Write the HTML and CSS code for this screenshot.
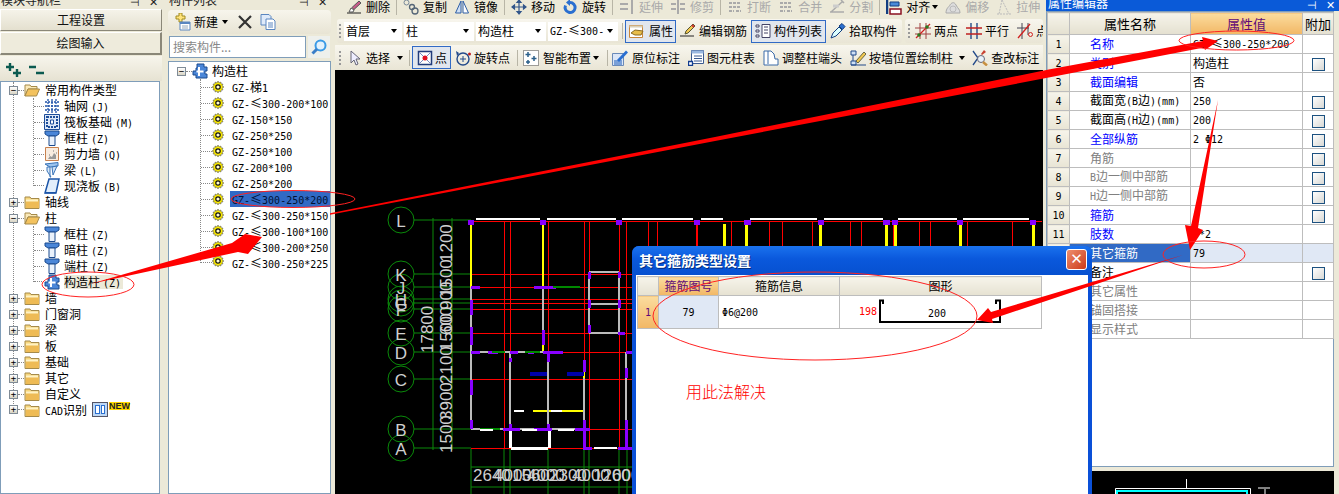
FILE: index.html
```html
<!DOCTYPE html>
<html lang="zh">
<head>
<meta charset="utf-8">
<title>构件绘图</title>
<link rel="stylesheet" href="styles.css">
</head>
<body>
<svg class="sprite" xmlns="http://www.w3.org/2000/svg">
  <symbol id="fold" viewBox="0 0 16 16"><path d="M1 3h5l1 1.500h8v10H1z" fill="#f6d67e" stroke="#a58a4a"/><path d="M2 7h13v7H2z" fill="#eebb55"/><path d="M2 5.500h12v2H2z" fill="#fff2c4"/></symbol>
  <symbol id="open" viewBox="0 0 16 16"><path d="M1 3h5l1 1.500h6V7H4L1 14z" fill="#fbe9b8" stroke="#a58a4a"/><path d="M4 7h11.500L12.500 14H1z" fill="#f3c25e" stroke="#a58a4a"/></symbol>
  <symbol id="gear" viewBox="0 0 12 12"><path d="M6 0l1 2 2-1 0 2 2 0-1 2 2 1-2 1 1 2-2 0 0 2-2-1-1 2-1-2-2 1 0-2-2 0 1-2-2-1 2-1-1-2 2 0 0-2 2 1z" fill="#ffee00" stroke="#444" stroke-width=".5"/><circle cx="6" cy="6" r="2.200" fill="#fffbd0" stroke="#111" stroke-width="1.200"/></symbol>
  <symbol id="grid" viewBox="0 0 16 16"><path d="M4 1v14M8 1v14M12 1v14M1 4h14M1 8h14M1 12h14" stroke="#1f52a8" stroke-width="1.300" stroke-dasharray="2 1" fill="none"/></symbol>
  <symbol id="raft" viewBox="0 0 16 16"><path d="M.5.500h15v15H.5z" fill="#dce7f7" stroke="#1d4d9a"/><path d="M3 3h10v10H3z" fill="none" stroke="#1d4d9a" stroke-dasharray="2 1" stroke-width="2"/><path d="M6.500 6h3v4h-3z" fill="#fff" stroke="#1d4d9a"/></symbol>
  <symbol id="col" viewBox="0 0 16 16"><path d="M1 1h14v3l-3 2H4L1 4z" fill="#4a86d8" stroke="#1b4a8e"/><path d="M5 6h6v9.500H5z" fill="#e9f1fb" stroke="#1b4a8e"/></symbol>
  <symbol id="wall" viewBox="0 0 16 16"><path d="M1.500 1.500h13v13h-13z" fill="#f8ece0" stroke="#c8814e"/><path d="M4 13l2-3 2 1 2-4 2 2v4z" fill="#999"/><path d="M5 9h1M9 5h1M12 7h1" stroke="#777"/></symbol>
  <symbol id="beam" viewBox="0 0 16 16"><path d="M1 2l13-1.500V4L6 5z" fill="#9cc4ee" stroke="#3a74b8"/><path d="M3 5l3 0 0 10H7L3 9z" fill="#dbe9f8" stroke="#3a74b8"/><path d="M8 5l5-1-4 9z" fill="#cfe2f6" stroke="#3a74b8"/></symbol>
  <symbol id="slab" viewBox="0 0 16 16"><path d="M5 1h10l-3 14H1z" fill="#e2eefb" stroke="#1c55a8" stroke-width="1.500"/><path d="M1 14h11v1.500H1z" fill="#1c55a8"/></symbol>
  <symbol id="gz" viewBox="0 0 16 16"><path d="M5 1h7v3h3v4h-2v3h2v4H4v-3H1V8h3V5h1z" fill="#4a86d8" stroke="#1b4a8e"/><path d="M7 4v9M4.500 8.500h7" stroke="#fff" stroke-width="2"/></symbol>
  <symbol id="plusg" viewBox="0 0 16 14"><path d="M5 0v8M1 4h8M12 6v8M8 10h8" stroke="#0b5a50" stroke-width="2.400" fill="none"/></symbol>
  <symbol id="minusg" viewBox="0 0 16 14"><path d="M1 4h7M8 10h8" stroke="#0b5a50" stroke-width="2.400" fill="none"/></symbol>
  <symbol id="newi" viewBox="0 0 18 18"><path d="M6 0v3H3v3h3v3h3V6h3V3H9V0z" fill="#ffe37a" stroke="#a08a20"/><path d="M7 9h10v8H7z" fill="#fff" stroke="#5a86c0"/><path d="M7 9h10v2H7z" fill="#5a86c0"/><path d="M9 13h6M9 15h6" stroke="#9ab"/></symbol>
  <symbol id="xi" viewBox="0 0 14 14"><path d="M1 1l12 12M13 1L1 13" stroke="#333" stroke-width="2.200"/></symbol>
  <symbol id="copyi" viewBox="0 0 16 16"><path d="M1 .500h8l2 2V11H1z" fill="#dfeafa" stroke="#5a86c0"/><path d="M6 5h7l2 2v8.500H6z" fill="#fff" stroke="#5a86c0"/><path d="M8 9h5M8 11h5M8 13h5" stroke="#5a86c0"/></symbol>
  <symbol id="lens" viewBox="0 0 16 16"><circle cx="9.500" cy="6.500" r="5" fill="#e2f1fd" stroke="#3a9ae6" stroke-width="2"/><path d="M6 10l-4.500 4.500" stroke="#3a7ec8" stroke-width="3"/></symbol>
  <symbol id="tdel" viewBox="0 0 16 16"><path d="M1 14h14" stroke="#222"/><path d="M3 13l2-4 3 2-1 2z" fill="#fff" stroke="#555"/><path d="M6 8.500L13 2l2 2-7 6.500z" fill="#c85a8a" stroke="#555"/></symbol>
  <symbol id="tcopy" viewBox="0 0 16 16"><circle cx="3.500" cy="3.500" r="2.500" fill="none" stroke="#789"/><circle cx="9" cy="8" r="2.500" fill="none" stroke="#567" stroke-width="1.300"/><circle cx="12" cy="12" r="3" fill="none" stroke="#567" stroke-width="1.300"/></symbol>
  <symbol id="tmir" viewBox="0 0 16 16"><path d="M7 2L1.500 14H7z" fill="#cfe0f5" stroke="#2f5fa5"/><path d="M9 2l5.500 12H9z" fill="#fff" stroke="#2f5fa5"/></symbol>
  <symbol id="tmov" viewBox="0 0 16 16"><path d="M8 1v14M1 8h14M8 1L6 3.500h4zM8 15l-2-2.500h4zM1 8l2.500-2v4zM15 8l-2.500-2v4z" stroke="#31558a" stroke-width="1.200" fill="#31558a"/></symbol>
  <symbol id="trot" viewBox="0 0 16 16"><path d="M8 3.500a5 5 0 1 1-4.500 3" fill="none" stroke="#2a6fd0" stroke-width="3"/><path d="M8 0v7L4 3.500z" fill="#2a6fd0"/></symbol>
  <symbol id="text" viewBox="0 0 16 16"><path d="M1 5h8M1 10h8M13 1v14" stroke="#aaa" stroke-width="2" fill="none"/></symbol>
  <symbol id="ttrim" viewBox="0 0 16 16"><path d="M1 5h5M1 10h5M10 5h5M10 10h5M8 1v14" stroke="#aaa" stroke-width="2" fill="none"/></symbol>
  <symbol id="tbrk" viewBox="0 0 16 16"><path d="M2 4h12M2 12h5M9 12h5M2 8h12" stroke="#aaa" stroke-width="2" stroke-dasharray="3 1" fill="none"/></symbol>
  <symbol id="tsplit" viewBox="0 0 16 16"><path d="M1 13h14M2 13L13 3M12 1l3 3" stroke="#aaa" stroke-width="1.500" fill="none"/><path d="M4 7h6" stroke="#ccc" stroke-width="3"/></symbol>
  <symbol id="talign" viewBox="0 0 16 16"><path d="M1 1v14" stroke="#123d80" stroke-width="2.500"/><path d="M4 3h9v4H4z" fill="#4a8ad8" stroke="#123d80"/><path d="M4 10h11v5H4z" fill="#fff" stroke="#8a1020" stroke-width="1.500"/></symbol>
  <symbol id="toff" viewBox="0 0 16 16"><path d="M1 14c0-5 3-6 4-8s4-4 6 0 4 4 4 8z" fill="#ddd" stroke="#aaa"/><circle cx="8" cy="10" r="3" fill="none" stroke="#bbb"/></symbol>
  <symbol id="tstr" viewBox="0 0 16 16"><path d="M1 15h14M6 1L3 15M6 1l7 14" stroke="#bbb" fill="none" stroke-dasharray="2 1"/></symbol>
  <symbol id="tprop" viewBox="0 0 16 16"><path d="M.5 2.500h13v12H.5z" fill="#fff" stroke="#c9863a"/><path d="M.5 2.500h13v2H.5z" fill="#d8d0b8"/><path d="M2 10l4-3 8 1-2 4H6z" fill="#e8bd4a" stroke="#8a6a20"/></symbol>
  <symbol id="tpen" viewBox="0 0 16 16"><path d="M0 13h14" stroke="#222"/><path d="M5 11l1-3L13 1l2 2-7 7z" fill="#f2c850" stroke="#553"/><path d="M12 2l2 2" stroke="#c33" stroke-width="2"/></symbol>
  <symbol id="tlist" viewBox="0 0 16 16"><path d="M1 2h3v2H1zM1 7h3v2H1zM1 12h3v2H1z" fill="#fff" stroke="#446"/><path d="M7 1.500h8v13H7z" fill="#fff" stroke="#446"/><path d="M9 4h4M9 7h4M9 10h4" stroke="#446"/></symbol>
  <symbol id="tpick" viewBox="0 0 16 16"><path d="M1 15l2-5 6-6 3 3-6 6z" fill="#dff" stroke="#123d80"/><path d="M9 3l3-2.500 3 3L12.500 6.500z" fill="#2a6fd0" stroke="#123d80"/></symbol>
  <symbol id="t2p" viewBox="0 0 16 16"><path d="M5 0v16M11 0v16M0 5h16M0 11h16" stroke="#a04040" fill="none"/><path d="M1 15L15 1" stroke="#d02020" stroke-width="1.300"/><circle cx="4" cy="12" r="1.800" fill="#2a7a20"/><circle cx="12" cy="4" r="1.800" fill="#2a7a20"/></symbol>
  <symbol id="tpar" viewBox="0 0 16 16"><path d="M5 0v16M11 0v16" stroke="#123d80" stroke-width="1.300"/><path d="M0 5h16M0 11h16" stroke="#c02020" stroke-width="1.300"/></symbol>
  <symbol id="tpa" viewBox="0 0 16 16"><path d="M5 0v16M11 0v12M0 5h12" stroke="#445" fill="none"/><path d="M1 15L13 1" stroke="#d02020" stroke-width="1.300"/><circle cx="13.500" cy="11.500" r="2" fill="none" stroke="#d02020"/></symbol>
  <symbol id="tsel" viewBox="0 0 16 16"><path d="M5 1v12l3-3 2 5 2-1-2-5h4z" fill="#eef" stroke="#667"/></symbol>
  <symbol id="tdot" viewBox="0 0 16 16"><path d="M1.500 1.500h13v13h-13z" fill="#fff" stroke="#223c7a" stroke-width="1.500"/><path d="M2 2l12 12M14 2L2 14" stroke="#7a8ac0"/><circle cx="8" cy="8" r="2.500" fill="#e01020"/></symbol>
  <symbol id="trp" viewBox="0 0 16 16"><circle cx="8" cy="9" r="6" fill="none" stroke="#234a8a" stroke-width="1.400"/><path d="M8 6v6M5 9h6" stroke="#234a8a"/><path d="M1 1l3 2-2 3z" fill="#234a8a"/><circle cx="14.500" cy="4" r="1.500" fill="#c02020"/></symbol>
  <symbol id="tsmart" viewBox="0 0 16 16"><path d="M.5.500h15v15H.5z" fill="#fff" stroke="#444" stroke-dasharray="1 1"/><path d="M5 2v5M2.500 4.500h5M11 6v5M8.500 8.500h5M5 10v4M3 12h4" stroke="#2a5f8a" stroke-width="1.500"/></symbol>
  <symbol id="tmark" viewBox="0 0 16 16"><path d="M.5 3.500h11v12H.5z" fill="#dbe6f7" stroke="#6a8ab8"/><path d="M2 10h8v5H2z" fill="#7aa0d8"/><path d="M5 10L14 .5l2 2L7 12z" fill="#2a6fd0"/></symbol>
  <symbol id="ttable" viewBox="0 0 16 16"><path d="M3.500.500h12v13h-12z" fill="#fff" stroke="#3a5a90"/><path d="M3.500.500h12v3h-12z" fill="#9ab8e0"/><path d="M6 6h8M6 8.500h8M6 11h8" stroke="#3a5a90"/><path d="M.5 11.500h4v4h-4z" fill="#fff" stroke="#123d90" stroke-width="1.300"/></symbol>
  <symbol id="tadj" viewBox="0 0 16 16"><path d="M1 1h7l3 3 1 5h3v6H1z" fill="#fff" stroke="#3a6aa8"/><path d="M5 1v13" stroke="#3a6aa8"/></symbol>
  <symbol id="twall" viewBox="0 0 16 16"><path d="M1 1h5v4H1zM1 11h5v4H1z" fill="#cfe0f5" stroke="#234a8a"/><path d="M3 5v6M1 15h15" stroke="#234a8a"/><path d="M6 11l8-9 2 2-8 9z" fill="#f2c850" stroke="#664"/></symbol>
  <symbol id="tchk" viewBox="0 0 16 16"><path d="M1 1l5 7-5 7" fill="none" stroke="#234a8a" stroke-width="1.300"/><path d="M12 0l-3 4 1 1 4-3z" fill="#c84030"/><circle cx="9" cy="9" r="3.500" fill="#e8f2fb" stroke="#667"/><path d="M11 12l4 3.500" stroke="#c89040" stroke-width="2.500"/></symbol>
</svg>

<div class="app">
  <aside class="nav">
    <div class="title"><span class="title-txt">模块导航栏</span><span class="pin">⊣</span><span class="pin">✕</span></div>
    <button class="wide">工程设置</button>
    <button class="wide wide-on">绘图输入</button>
    <div class="bar-icons">
      <svg class="i16"><use href="#plusg"/></svg>
      <svg class="i16"><use href="#minusg"/></svg>
    </div>
    <div class="tree">
      <ul class="root">
        <li>
          <div class="row"><i class="exp">−</i><i class="tick"></i><svg class="i16"><use href="#open"/></svg><span class="lb">常用构件类型</span></div>
          <ul class="kids">
            <li class="row"><i class="tick2"></i><svg class="i16"><use href="#grid"/></svg><span class="lc">轴网<b class="m">(J)</b></span></li>
            <li class="row"><i class="tick2"></i><svg class="i16"><use href="#raft"/></svg><span class="lc">筏板基础<b class="m">(M)</b></span></li>
            <li class="row"><i class="tick2"></i><svg class="i16"><use href="#col"/></svg><span class="lc">框柱<b class="m">(Z)</b></span></li>
            <li class="row"><i class="tick2"></i><svg class="i16"><use href="#wall"/></svg><span class="lc">剪力墙<b class="m">(Q)</b></span></li>
            <li class="row"><i class="tick2"></i><svg class="i16"><use href="#beam"/></svg><span class="lc">梁<b class="m">(L)</b></span></li>
            <li class="row last"><i class="tick2"></i><svg class="i16"><use href="#slab"/></svg><span class="lc">现浇板<b class="m">(B)</b></span></li>
          </ul>
          <div class="after-kids"></div>
        </li>
        <li class="row"><i class="exp">+</i><i class="tick"></i><svg class="i16"><use href="#fold"/></svg><span class="lb">轴线</span></li>
        <li>
          <div class="row"><i class="exp">−</i><i class="tick"></i><svg class="i16"><use href="#open"/></svg><span class="lb">柱</span></div>
          <ul class="kids">
            <li class="row"><i class="tick2"></i><svg class="i16"><use href="#col"/></svg><span class="lc">框柱<b class="m">(Z)</b></span></li>
            <li class="row"><i class="tick2"></i><svg class="i16"><use href="#col"/></svg><span class="lc">暗柱<b class="m">(Z)</b></span></li>
            <li class="row"><i class="tick2"></i><svg class="i16"><use href="#col"/></svg><span class="lc">端柱<b class="m">(Z)</b></span></li>
            <li class="row last"><i class="tick2"></i><svg class="i16"><use href="#gz"/></svg><span class="lc lc-on">构造柱<b class="m">(Z)</b></span></li>
          </ul>
          <div class="after-kids"></div>
        </li>
        <li class="row"><i class="exp">+</i><i class="tick"></i><svg class="i16"><use href="#fold"/></svg><span class="lb">墙</span></li>
        <li class="row"><i class="exp">+</i><i class="tick"></i><svg class="i16"><use href="#fold"/></svg><span class="lb">门窗洞</span></li>
        <li class="row"><i class="exp">+</i><i class="tick"></i><svg class="i16"><use href="#fold"/></svg><span class="lb">梁</span></li>
        <li class="row"><i class="exp">+</i><i class="tick"></i><svg class="i16"><use href="#fold"/></svg><span class="lb">板</span></li>
        <li class="row"><i class="exp">+</i><i class="tick"></i><svg class="i16"><use href="#fold"/></svg><span class="lb">基础</span></li>
        <li class="row"><i class="exp">+</i><i class="tick"></i><svg class="i16"><use href="#fold"/></svg><span class="lb">其它</span></li>
        <li class="row"><i class="exp">+</i><i class="tick"></i><svg class="i16"><use href="#fold"/></svg><span class="lb">自定义</span></li>
        <li class="row last"><i class="exp">+</i><i class="tick"></i><svg class="i16"><use href="#fold"/></svg><span class="lb"><b class="m">CAD</b>识别</span><span class="cadbox"><i></i><i></i></span><span class="newtag">NEW</span></li>
      </ul>
    </div>
  </aside>

  <section class="list">
    <div class="title"><span class="title-txt">构件列表</span><span class="pin">⊣</span><span class="pin">✕</span></div>
    <div class="list-bar">
      <svg class="i18"><use href="#newi"/></svg><span>新建</span><i class="caret"></i>
      <svg class="i14 list-x"><use href="#xi"/></svg>
      <svg class="i16 list-c"><use href="#copyi"/></svg>
    </div>
    <div class="search">
      <div class="search-in">搜索构件...</div>
      <div class="search-btn"><svg class="i16"><use href="#lens"/></svg></div>
    </div>
    <div class="tree list-tree">
      <div class="row"><i class="exp">−</i><i class="tick"></i><svg class="i16"><use href="#gz"/></svg><span class="lb lb-l">构造柱</span></div>
      <ul class="kids-l">
        <li class="row"><i class="tick3"></i><svg class="i12"><use href="#gear"/></svg><span class="gzt"><b class="m">GZ-</b>梯<b class="m">1</b></span></li>
        <li class="row"><i class="tick3"></i><svg class="i12"><use href="#gear"/></svg><span class="gzt"><b class="m">GZ-</b>≤<b class="m">300-200*100</b></span></li>
        <li class="row"><i class="tick3"></i><svg class="i12"><use href="#gear"/></svg><span class="gzt"><b class="m">GZ-150*150</b></span></li>
        <li class="row"><i class="tick3"></i><svg class="i12"><use href="#gear"/></svg><span class="gzt"><b class="m">GZ-250*250</b></span></li>
        <li class="row"><i class="tick3"></i><svg class="i12"><use href="#gear"/></svg><span class="gzt"><b class="m">GZ-250*100</b></span></li>
        <li class="row"><i class="tick3"></i><svg class="i12"><use href="#gear"/></svg><span class="gzt"><b class="m">GZ-200*100</b></span></li>
        <li class="row"><i class="tick3"></i><svg class="i12"><use href="#gear"/></svg><span class="gzt"><b class="m">GZ-250*200</b></span></li>
        <li class="row"><i class="tick3"></i><svg class="i12"><use href="#gear"/></svg><span class="gzt gzt-on"><b class="m">GZ-</b>≤<b class="m">300-250*200</b></span></li>
        <li class="row"><i class="tick3"></i><svg class="i12"><use href="#gear"/></svg><span class="gzt"><b class="m">GZ-</b>≤<b class="m">300-250*150</b></span></li>
        <li class="row"><i class="tick3"></i><svg class="i12"><use href="#gear"/></svg><span class="gzt"><b class="m">GZ-</b>≤<b class="m">300-100*100</b></span></li>
        <li class="row"><i class="tick3"></i><svg class="i12"><use href="#gear"/></svg><span class="gzt"><b class="m">GZ-</b>≤<b class="m">300-200*250</b></span></li>
        <li class="row last"><i class="tick3"></i><svg class="i12"><use href="#gear"/></svg><span class="gzt"><b class="m">GZ-</b>≤<b class="m">300-250*225</b></span></li>
      </ul>
    </div>
  </section>

  <main class="main">
    <div class="tb tb-top">
      <span class="tool"><svg class="i16"><use href="#tdel"/></svg>删除</span><i class="sep"></i>
      <span class="tool"><svg class="i16"><use href="#tcopy"/></svg>复制</span>
      <span class="tool"><svg class="i16"><use href="#tmir"/></svg>镜像</span><i class="sep"></i>
      <span class="tool"><svg class="i16"><use href="#tmov"/></svg>移动</span>
      <span class="tool"><svg class="i16"><use href="#trot"/></svg>旋转</span><i class="sep"></i>
      <span class="tool off"><svg class="i16"><use href="#text"/></svg>延伸</span>
      <span class="tool off"><svg class="i16"><use href="#ttrim"/></svg>修剪</span><i class="sep"></i>
      <span class="tool off"><svg class="i16"><use href="#tbrk"/></svg>打断</span>
      <span class="tool off"><svg class="i16"><use href="#tbrk"/></svg>合并</span>
      <span class="tool off"><svg class="i16"><use href="#tsplit"/></svg>分割</span><i class="sep"></i>
      <span class="tool"><svg class="i16"><use href="#talign"/></svg>对齐<i class="caret"></i></span>
      <span class="tool off"><svg class="i16"><use href="#toff"/></svg>偏移</span>
      <span class="tool off"><svg class="i16"><use href="#tstr"/></svg>拉伸</span>
    </div>

    <div class="tb-row tb-mid">
      <div class="tbx tbx-a">
        <i class="grip"></i>
        <div class="combo c58"><span>首层</span><i class="caret"></i></div>
        <div class="combo c70"><span>柱</span><i class="caret"></i></div>
        <div class="combo c70"><span>构造柱</span><i class="caret"></i></div>
        <div class="combo c70"><span><b class="m">GZ-</b>≤<b class="m">300-</b></span><i class="caret"></i></div>
        <i class="sep sep-a"></i>
        <span class="tool on"><svg class="i16"><use href="#tprop"/></svg>属性</span>
        <span class="tool g3"><svg class="i16"><use href="#tpen"/></svg>编辑钢筋</span>
        <span class="tool on on-w g3"><svg class="i16"><use href="#tlist"/></svg>构件列表</span>
        <span class="tool g3"><svg class="i16"><use href="#tpick"/></svg>拾取构件</span>
      </div>
      <div class="tbx tbx-b">
        <i class="grip"></i>
        <span class="tool g3"><svg class="i16"><use href="#t2p"/></svg>两点</span>
        <span class="tool g3"><svg class="i16"><use href="#tpar"/></svg>平行</span>
        <span class="tool g3"><svg class="i16"><use href="#tpa"/></svg>点</span>
      </div>
    </div>

    <div class="tb-row tb-low">
      <i class="grip"></i>
      <span class="tool"><svg class="i16"><use href="#tsel"/></svg>选择<i class="caret car-wide"></i></span>
      <i class="sep sep-a"></i>
      <span class="tool on dotbtn"><svg class="i16"><use href="#tdot"/></svg>点</span>
      <span class="tool g3"><svg class="i16"><use href="#trp"/></svg>旋转点</span>
      <i class="sep sep-b"></i>
      <span class="tool"><svg class="i16"><use href="#tsmart"/></svg>智能布置<i class="caret"></i></span>
      <i class="sep sep-c"></i>
      <span class="tool"><svg class="i16"><use href="#tmark"/></svg>原位标注</span>
      <span class="tool g3 wg"><svg class="i16"><use href="#ttable"/></svg>图元柱表</span>
      <span class="tool g3 wg"><svg class="i16"><use href="#tadj"/></svg>调整柱端头</span>
      <span class="tool g3 wg"><svg class="i16"><use href="#twall"/></svg>按墙位置绘制柱<i class="caret car-wide"></i></span>
      <span class="tool g3 wg-s"><svg class="i16"><use href="#tchk"/></svg>查改标注</span>
    </div>

    <svg class="cad" viewBox="335 70 708 424" xmlns="http://www.w3.org/2000/svg">
      <g stroke="#0a8a0a" fill="none">
        <path d="M414 220H471M414 274H471M414 287H471M414 299H471M414 303H471M414 309H471M414 333H471M414 352H471M414 379H471M414 429H471M414 448H471"/>
        <path d="M433 218V450M452 218V450M471 449V494M504 449V494M510 449V494M548 449V494M584 449V494M589 449V494M619 449V494M627 449V494"/>
        <path d="M471 467H632M471 487H632"/>
        <circle cx="401" cy="220" r="13"/><circle cx="401" cy="274" r="13"/><circle cx="401" cy="287" r="13"/><circle cx="401" cy="299" r="13"/><circle cx="401" cy="303" r="13"/><circle cx="401" cy="309" r="13"/><circle cx="401" cy="333" r="13"/><circle cx="401" cy="352" r="13"/><circle cx="401" cy="379" r="13"/><circle cx="401" cy="429" r="13"/><circle cx="401" cy="448" r="13"/>
      </g>
      <g class="cadt" text-anchor="middle">
        <text x="401" y="227">L</text><text x="401" y="281">K</text><text x="401" y="294">J</text><text x="401" y="306">H</text><text x="401" y="310">G</text><text x="401" y="316">F</text><text x="401" y="340">E</text><text x="401" y="359">D</text><text x="401" y="386">C</text><text x="401" y="436">B</text><text x="401" y="455">A</text>
      </g>
      <g class="cadt">
        <text transform="translate(433 353) rotate(-90)">17800</text>
        <text transform="translate(452 453) rotate(-90)">1500</text>
        <text transform="translate(452 420) rotate(-90)">3900</text>
        <text transform="translate(452 384) rotate(-90)">2100</text>
        <text transform="translate(452 351) rotate(-90)">1500</text>
        <text transform="translate(452 335) rotate(-90)">600</text>
        <text transform="translate(452 310) rotate(-90)">900</text>
        <text transform="translate(452 297) rotate(-90)">1500</text>
        <text transform="translate(452 262) rotate(-90)">1200</text>
        <text x="473" y="481">2640</text><text x="494" y="481">4000</text><text x="512" y="481">1560</text><text x="527" y="481">4000</text><text x="549" y="481">2300</text><text x="572" y="481">4000</text><text x="593" y="481">1200</text><text x="612" y="481">600</text>
      </g>
      <path class="ln" fill="none" stroke="#f00" d="M471 221H1042M471 274H632M471 287H632M471 299H632M471 303H632M471 309H632M471 333H632M471 352H632M471 379H632M471 429H632M471 448H632M504 221V448M510 221V448M548 221V448M584 221V448M589 221V448M619 221V448M626 221V448M648 221V250M657 221V250M731 221V250M769 221V250M782 221V250M812 221V250M850 221V250M861 221V250M893 221V250M919 221V250M930 221V250M967 221V250M1012 221V250"/>
      <path class="ln" fill="none" stroke="#f00" stroke-width="2" d="M697 221V250"/>
      <path class="ln" fill="none" stroke="#fff" stroke-width="2" d="M476 219H540M547 219H616M622 219H693M701 219H723M750 219H817M824 219H883M898 219H957M963 219H1029"/>
      <path class="ln" fill="none" stroke="#ff0" stroke-width="2" d="M471 224V287M543 224V287M543 333V352M584 368V378M533 411H583"/>
      <path class="ln" fill="none" stroke="#ff0" stroke-width="3" d="M724 224V250M746 224V250M820 224V250M886 224V250M895 224V250M960 224V250M1033 224V250"/>
      <path class="ln" fill="none" stroke="#bbb" stroke-width="2" d="M471 287V429M543 287V333M471 352H563M510 352V429M548 352V429M584 378V448M589 272V333M619 272V333M589 272H619M589 304H619M589 333H619M626 352V448M471 429H584"/>
      <path class="ln" fill="none" stroke="#80f" stroke-width="3" d="M471 287H480M471 300V315M471 327V345M471 352H480M488 352H498M510 352H518M528 352H534M543 352H563M471 380V395M471 420V429M510 358V362M548 352V362M510 424V429M548 424V429M503 429H520M534 429H552M575 429H590M584 360V372M584 420V448M543 330V345M534 287H556M589 272V279M589 300V308M589 325V333M619 272V278M619 300V308M618 333H625M583 448H592M618 448H632M626 352H632M626 368V378M626 420V448"/>
      <path class="ln" fill="#80f" d="M468 220h6v5h-6zM540 220h6v5h-6zM616 220h6v5h-6zM694 220h6v5h-6zM744 220h7v5h-7zM818 220h6v5h-6zM883 220h7v5h-7zM892 220h6v5h-6zM957 220h6v5h-6zM1030 220h6v5h-6z"/>
      <path class="ln" fill="none" stroke="#080" stroke-width="2" d="M492 352H505M525 352H540M553 287H580M480 429H500"/>
      <path class="ln" fill="none" stroke="#fff" stroke-width="2" d="M480 430H493M522 430H537M558 430H574M514 411H524M551 411H562M594 448H617"/>
      <path class="ln" fill="none" stroke="#fff" stroke-width="3" d="M510 431V448M549 431V448M511 448H548"/>
      <path class="ln" fill="none" stroke="#00a" stroke-width="4" d="M530 374H547M567 374H584"/>
    </svg>
  </main>

  <aside class="props">
    <div class="ptitle"><span class="ptitle-txt">属性编辑器</span><span class="pin">⊣</span><span class="pin">✕</span></div>
    <div class="pbody">
      <table class="ptable">
        <colgroup><col class="p1"><col class="p2"><col class="p3"><col class="p4"></colgroup>
        <thead>
          <tr><th></th><th>属性名称</th><th class="th-on">属性值</th><th>附加</th></tr>
        </thead>
        <tbody>
          <tr><th><b class="m">1</b></th><td class="nm bl">名称</td><td class="val"><b class="m">GZ-</b>≤<b class="m">300-250*200</b></td><td></td></tr>
          <tr><th><b class="m">2</b></th><td class="nm bl">类别</td><td class="val">构造柱</td><td><i class="ck"></i></td></tr>
          <tr><th><b class="m">3</b></th><td class="nm bl">截面编辑</td><td class="val">否</td><td></td></tr>
          <tr><th><b class="m">4</b></th><td class="nm">截面宽<b class="m">(B</b>边<b class="m">)(mm)</b></td><td class="val"><b class="m">250</b></td><td><i class="ck"></i></td></tr>
          <tr><th><b class="m">5</b></th><td class="nm">截面高<b class="m">(H</b>边<b class="m">)(mm)</b></td><td class="val"><b class="m">200</b></td><td><i class="ck"></i></td></tr>
          <tr><th><b class="m">6</b></th><td class="nm bl">全部纵筋</td><td class="val"><b class="m">2 Φ12</b></td><td><i class="ck"></i></td></tr>
          <tr><th><b class="m">7</b></th><td class="nm gr">角筋</td><td class="val"></td><td><i class="ck"></i></td></tr>
          <tr><th><b class="m">8</b></th><td class="nm gr"><b class="m">B</b>边一侧中部筋</td><td class="val"></td><td><i class="ck"></i></td></tr>
          <tr><th><b class="m">9</b></th><td class="nm gr"><b class="m">H</b>边一侧中部筋</td><td class="val"></td><td><i class="ck"></i></td></tr>
          <tr><th><b class="m">10</b></th><td class="nm bl">箍筋</td><td class="val"></td><td><i class="ck"></i></td></tr>
          <tr><th><b class="m">11</b></th><td class="nm bl">肢数</td><td class="val"><b class="m">4*2</b></td><td></td></tr>
          <tr class="sel"><th><b class="m">12</b></th><td class="nm">其它箍筋</td><td class="val"><b class="m">79</b></td><td></td></tr>
          <tr><th><b class="m">13</b></th><td class="nm">备注</td><td class="val"></td><td><i class="ck"></i></td></tr>
          <tr><th><b class="m">14</b></th><td class="nm gr">其它属性</td><td class="val"></td><td></td></tr>
          <tr><th><b class="m">15</b></th><td class="nm gr">锚固搭接</td><td class="val"></td><td></td></tr>
          <tr><th><b class="m">16</b></th><td class="nm gr">显示样式</td><td class="val"></td><td></td></tr>
        </tbody>
      </table>
    </div>
    <svg class="preview" viewBox="1046 471 288 23" xmlns="http://www.w3.org/2000/svg">
      <path fill="none" stroke="#fff" d="M1115.500 494V488.500H1250.500V494M1186.500 479V489M1258 488H1270M1265 489V494"/>
      <path fill="none" stroke="#0ff" stroke-width="2" d="M1117 494V491H1247V494"/>
    </svg>
  </aside>
</div>

<section class="dialog">
  <header class="dlg-head"><span>其它箍筋类型设置</span><i class="dlg-x">✕</i></header>
  <div class="dlg-body">
    <table class="dtable">
      <colgroup><col class="d1"><col class="d2"><col class="d3"><col class="d4"></colgroup>
      <thead><tr><th></th><th class="th-on">箍筋图号</th><th>箍筋信息</th><th>图形</th></tr></thead>
      <tbody>
        <tr>
          <th class="th-on"><b class="m">1</b></th>
          <td class="d-cur"><b class="m">79</b></td>
          <td class="d-info"><b class="m">Φ6@200</b></td>
          <td>
            <div class="shape">
              <b class="m s-red">198</b>
              <svg class="bar" viewBox="0 0 124 24"><path d="M5 5V1.500H2V23H122V1.500H118V5" fill="none" stroke="#000" stroke-width="2"/></svg>
              <b class="m s-200">200</b>
            </div>
          </td>
        </tr>
      </tbody>
    </table>
    <p class="dlg-note">用此法解决</p>
  </div>
</section>

<svg class="marks" viewBox="0 0 1339 494" xmlns="http://www.w3.org/2000/svg">
  <g fill="#f00">
    <path d="M90 284L232 243 245 234 262 237 248 254 238 252z"/>
    <path d="M330 213.200L715 137 1050 69.300 1203 41 1202 37 1218 41 1205 50 1204 47.500 1050 77.300 715 141 330 214.800z"/>
    <path d="M1218 100L1198 228 1203 230 1190 250 1185 225 1191 226z"/>
    <path d="M1183 255L1040 297.500 991 312 988 308 977 320 993 323 992 319 1040 303z"/>
  </g>
  <g fill="none" stroke="#f22" stroke-width="1">
    <ellipse cx="88" cy="284.500" rx="46" ry="12.500"/>
    <ellipse cx="293" cy="199" rx="62" ry="8.500"/>
    <ellipse cx="1236.500" cy="40.500" rx="57.500" ry="9.500"/>
    <ellipse cx="1204" cy="254.500" rx="41" ry="13.500"/>
    <ellipse cx="815" cy="316" rx="162" ry="44"/>
  </g>
</svg>
</body>
</html>
```

FILE: styles.css
```css
* { box-sizing: border-box; }
html, body { margin: 0; padding: 0; }
body {
  position: relative;
  width: 1339px;
  height: 494px;
  overflow: hidden;
  background: #ece9d8;
  color: #000;
  font: 12px/16px "Noto Sans CJK SC", "Liberation Sans", sans-serif;
}
ul { list-style: none; margin: 0; padding: 0; }
i { font-style: normal; }
.sprite { display: none; }
.m { font: 400 10px/16px "DejaVu Sans Mono", "Liberation Mono", monospace; }
.i12 { width: 12px; height: 12px; flex: none; }
.i14 { width: 14px; height: 14px; flex: none; }
.i16 { width: 16px; height: 16px; flex: none; }
.i18 { width: 18px; height: 18px; flex: none; }

.app { display: flex; width: 1339px; height: 494px; }

/* side panels */
.nav { width: 162px; display: flex; flex-direction: column; margin-right: 6px; }
.list { width: 163px; display: flex; flex-direction: column; margin-right: 4px; }
.title {
  display: flex;
  height: 8px;
  overflow: hidden;
  align-items: flex-end;
  color: #222;
  padding-left: 1px;
}
.title-txt { flex: 1; white-space: nowrap; line-height: 16px; }
.pin { width: 18px; text-align: center; line-height: 14px; font-size: 11px; }
.wide {
  display: block;
  width: 100%;
  height: 22px;
  margin: 1px 0 0;
  padding: 0;
  border: 1px solid;
  border-color: #fff #8a8778 #8a8778 #fff;
  background: linear-gradient(#f5f3e9, #e4e0cf);
  font: inherit;
  color: #111;
}
.wide-on { height: 23px; border-width: 1px 2px 2px 1px; background: #eeebdc; }
.bar-icons { display: flex; gap: 7px; height: 25px; padding: 6px 0 0 5px; background: linear-gradient(#f7f5ec, #e6e2d2); margin-top: 1px; }
.tree { flex: 1; background: #fff; border: 1px solid #7f9db9; overflow: hidden; }
.nav .tree { width: 160px; padding: 0 0 0 12px; }

.row { display: flex; align-items: center; height: 16px; white-space: nowrap; }
.root { border-left: 1px dotted #888; margin-top: 0; }
.root > li > .row, .root > li.row { margin-left: -5px; }
.exp {
  width: 9px;
  height: 9px;
  flex: none;
  border: 1px solid #7f8b96;
  background: linear-gradient(#fff, #d8d4c4);
  font: 9px/7px "DejaVu Sans Mono", monospace;
  text-align: center;
  color: #000;
}
.tick { width: 6px; flex: none; border-top: 1px dotted #888; }
.lb { margin-left: 5px; }
.lb-l { margin-left: 4px; }
.kids { margin-left: 19px; border-left: 1px dotted #888; }
.after-kids { height: 8px; }
.last { height: 8px; align-items: flex-start; }
.last > .tick, .last > .tick2, .last > .tick3 { margin-top: 7px; }
.root > .last > .exp { margin-top: 3px; }
.tick2 { width: 10px; flex: none; border-top: 1px dotted #888; }
.lc { margin-left: 4px; padding: 0 2px 0 0; height: 14px; line-height: 14px; }
.last > .lc { margin-top: 1px; }
.lc-on { background: #ece9d8; }
.lc .m { margin-left: 3px; line-height: 14px; }
.cadbox {
  display: flex;
  gap: 1px;
  width: 16px;
  height: 15px;
  margin-left: 5px;
  padding: 2px;
  border: 1px solid #556;
  background: #bcd7f5;
}
.cadbox i { flex: 1; background: #fff; border: 1px solid #2a6fd0; }
.newtag {
  height: 8px;
  margin: 0 0 0 1px;
  background: #ffd800;
  font: 700 9px/8px "Liberation Sans", sans-serif;
  color: #222;
}

.list-bar {
  display: flex;
  align-items: center;
  height: 24px;
  margin-top: 2px;
  padding-left: 5px;
  gap: 3px;
  background: linear-gradient(#f7f5ec, #e8e4d4);
  border-radius: 4px;
}
.list-bar .caret { margin-left: 1px; }
.list-x { margin-left: 7px; }
.list-c { margin-left: 5px; }
.search { display: flex; height: 22px; margin: 2px 0 3px 1px; gap: 2px; }
.search-in { width: 137px; border: 1px solid #7f9db9; background: #fff; color: #888; padding: 2px 0 0 3px; }
.search-btn { width: 22px; padding: 3px; background: #eef0ec; }
.list-tree { padding: 1px 0 0 8px; width: 163px; }
.kids-l { margin-left: 23px; border-left: 1px dotted #888; }
.tick3 { width: 11px; flex: none; border-top: 1px dotted #888; }
.gzt { padding: 0 3px 0 2px; margin-left: 6px; width: 100px; height: 16px; line-height: 16px; flex: none; }
.gzt-on { background: #316ac5; color: #001133; }

/* toolbars */
.main { width: 708px; display: flex; flex-direction: column; margin-right: 3px; }
.tool { display: inline-flex; align-items: center; gap: 4px; white-space: nowrap; height: 16px; }
.g3 { gap: 3px; }
.off { color: #aaa; }
.on {
  height: 23px;
  padding: 0 2px 0 3px;
  border: 1px solid #316ac5;
  background: #e1e6ee;
}
.on-w { padding-right: 3px; }
.dotbtn { gap: 2px; padding: 0 3px 0 4px; }
.caret {
  width: 0;
  height: 0;
  flex: none;
  border: 3px solid transparent;
  border-top: 4px solid #000;
  border-bottom: 0;
}
.tool .caret { margin-left: -2px; }
.tool .car-wide { margin-left: 3px; }
.tb {
  display: flex;
  align-items: center;
  gap: 7px;
  height: 19px;
  padding: 0 0 6px 11px;
  overflow: hidden;
}
.tb > .tool { height: 13px; }
.sep { width: 1px; height: 16px; flex: none; margin: 0 -1px; background: #b8b5a6; }
.tb-row { display: flex; align-items: center; height: 24px; overflow: hidden; }
.tb-mid { gap: 3px; }
.tbx { display: flex; align-items: center; gap: 4px; height: 24px; background: linear-gradient(#f8f6ee, #e9e5d5); border-radius: 3px; overflow: hidden; }
.tbx-a { width: 565px; margin-left: 2px; padding-left: 2px; }
.tbx-b { flex: 1; padding-left: 3px; gap: 8px; }
.tbx-b .grip { margin-right: -3px; }
.grip { width: 2px; height: 14px; flex: none; background: repeating-linear-gradient(#999 0 2px, transparent 2px 4px); }
.combo { display: flex; align-items: center; height: 19px; background: #fff; padding: 0 5px 0 2px; justify-content: space-between; }
.tbx-a .combo { margin-right: -2px; }
.tbx-a .grip { margin-right: -1px; }
.c58 { width: 58px; }
.c70 { width: 70px; }
.sep-a { margin: 0 -2px 0 2px; }
.sep-b { margin: 0 1px 0 3px; }
.sep-c { margin: 0 0 0 4px; }
.tb-low {
  margin-top: 2px;
  height: 25px;
  padding-left: 4px;
  gap: 4px;
  background: linear-gradient(#f8f6ee, #e9e5d5);
}
.tb-low > .grip { margin-right: 1px; }
.wg { margin-left: 4px; }
.wg-s { margin-left: 3px; }
.cad { display: block; width: 708px; height: 424px; background: #000; }
.ln { shape-rendering: crispEdges; }
svg text { font: 17px "Liberation Sans", sans-serif; fill: #cfcfcf; }

/* properties */
.props { width: 293px; display: flex; flex-direction: column; }
.ptitle {
  display: flex;
  height: 11px;
  overflow: hidden;
  align-items: flex-end;
  background: #0a5ad8;
  color: #fff;
  padding-left: 2px;
}
.ptitle-txt { flex: 1; line-height: 16px; white-space: nowrap; }
.pbody {
  width: 288px;
  height: 456px;
  background: #fff;
  border: 1px solid #7f9db9;
}
.ptable, .dtable { border-collapse: collapse; table-layout: fixed; }
.ptable { width: 286px; }
.p1 { width: 22px; }
.p2 { width: 121px; }
.p3 { width: 112px; }
.p4 { width: 31px; }
.ptable th, .ptable td, .dtable th, .dtable td {
  padding: 0;
  border: 1px solid #bdbdbd;
  font-weight: 400;
  white-space: nowrap;
}
.ptable thead th { height: 22px; font-size: 13px; background: linear-gradient(#f6f4ea, #e4e0d0); text-align: center; }
.ptable .th-on, .dtable .th-on { background: linear-gradient(#fbdc9e, #f2b765); color: #5f0a78; }
.ptable tbody tr { height: 19px; }
.ptable tbody th { background: linear-gradient(#f6f4ea, #e8e4d4); text-align: center; }
.ptable .nm { padding-left: 20px; }
.bl { color: #00f; }
.gr { color: #808080; }
.ptable .val { padding-left: 2px; }
.ptable td:last-child { text-align: center; }
.ck {
  display: inline-block;
  width: 13px;
  height: 13px;
  vertical-align: middle;
  border: 1px solid #1c5180;
  background: linear-gradient(135deg, #fff, #d8d8d4);
}
.sel .nm { background: #316ac5; color: #fff; }
.sel .val, .sel td:last-child { background: #e0e8f5; }
.preview { display: block; width: 288px; height: 23px; margin-top: 4px; background: #000; }

/* dialog and annotations */
.dialog {
  position: absolute;
  left: 632px;
  top: 246px;
  width: 460px;
  height: 248px;
  display: flex;
  flex-direction: column;
  background: #0a50d8;
  border-radius: 7px 7px 0 0;
}
.dlg-head {
  display: flex;
  align-items: center;
  justify-content: space-between;
  height: 29px;
  padding: 0 5px 2px 7px;
  flex: none;
  background: linear-gradient(#1a72ee, #0a58dc 45%, #0650d0);
  border-radius: 7px 7px 0 0;
  color: #fff;
  font-size: 14px;
  font-weight: 700;
  text-shadow: 1px 1px #032d80;
}
.dlg-x {
  width: 21px;
  height: 21px;
  border: 1px solid #fff;
  border-radius: 3px;
  background: linear-gradient(135deg, #ee8e6e, #cc3a18);
  font: 700 15px/19px "DejaVu Sans", sans-serif;
  text-align: center;
  text-shadow: none;
}
.dlg-body { flex: 1; margin: 0 4px; padding: 1px 0 0 1px; background: #fff; }
.dtable { width: 404px; }
.d1 { width: 21px; }
.d2 { width: 60px; }
.d3 { width: 121px; }
.d4 { width: 202px; }
.dtable thead th { height: 19px; text-align: center; font-size: 12px; background: linear-gradient(#f6f4ea, #e6e2d2); }
.dtable tbody tr { height: 33px; }
.dtable tbody th { text-align: center; }
.d-cur { background: #e0e8f5; text-align: center; }
.dtable .d-info { padding-left: 3px; }
.shape { display: flex; align-items: center; height: 32px; padding-left: 19px; }
.s-red { color: #f00; width: 19px; }
.bar { width: 124px; height: 24px; flex: none; margin-top: -2px; }
.s-200 { margin-left: -74px; margin-top: 3px; }
.dlg-note { margin: 51px 0 0 49px; color: #f00; font-size: 16px; font-weight: 300; line-height: 22px; }
.marks { position: absolute; left: 0; top: 0; width: 1339px; height: 494px; pointer-events: none; }
```
